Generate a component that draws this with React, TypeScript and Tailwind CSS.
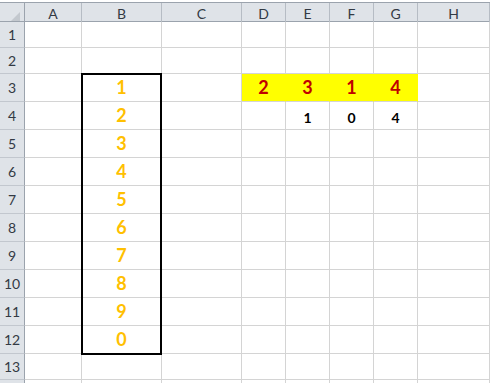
const cols = ["A", "B", "C", "D", "E", "F", "G", "H"];

// row heights in px (border included)
const rows: { n: number; h: string }[] = [
  { n: 1, h: "h-[26px]" },
  { n: 2, h: "h-[26px]" },
  ...[3, 4, 5, 6, 7, 8, 9, 10, 11, 12].map((n) => ({ n, h: "h-[28px]" })),
  { n: 13, h: "h-[26px]" },
  { n: 14, h: "h-[26px]" },
];

const digits = ["1", "2", "3", "4", "5", "6", "7", "8", "9", "0"];
const top = ["2", "3", "1", "4"];
const below = ["", "1", "0", "4"];

const gridCols =
  "grid grid-cols-[25px_57px_80px_80px_44px_44px_44px_44px_1fr]";

function Cell({ row, col }: { row: number; col: number }) {
  // col 0 = A
  let content: React.ReactNode = null;
  let extra = "border-r-[#d4d4d4]";
  if (col === 1 && row >= 3 && row <= 12) {
    content = (
      <span className="text-[18px] font-bold text-[#ffc000]">{digits[row - 3]}</span>
    );
  }
  if (row === 3 && col >= 3 && col <= 6) {
    extra = "border-r-[#ffff00] bg-[#ffff00]";
    content = (
      <span className="text-[18px] font-bold text-[#c00000]">{top[col - 3]}</span>
    );
  }
  if (row === 4 && col >= 3 && col <= 6) {
    content = (
      <span className="pt-1 text-[14px] font-bold text-black">{below[col - 3]}</span>
    );
  }
  return (
    <div
      className={`flex items-center justify-center border-b border-r border-b-[#d4d4d4] ${extra}`}
    >
      {content}
    </div>
  );
}

export default function App() {
  return (
    <div className="h-[383px] w-[490px] overflow-hidden bg-white font-['Lato','Liberation_Sans',sans-serif] pt-[2px]">
      <div className="relative">
        {/* column headers */}
        <div className={`${gridCols} h-[20px] border-y border-y-[#9ba3ad] bg-[#dfe3e8]`}>
          <div className="relative border-r border-r-[#9ba3ad]">
            <div className="absolute bottom-[3px] right-[4px] h-0 w-0 border-b-[9px] border-l-[9px] border-b-[#c3c8ce] border-l-transparent" />
          </div>
          {cols.map((c) => (
            <div
              key={c}
              className="flex items-center justify-center border-r border-r-[#b6bcc4] text-[14px] text-[#333a44]"
            >
              {c}
            </div>
          ))}
        </div>
        {/* rows */}
        {rows.map((r) => (
          <div key={r.n} className={`${gridCols} ${r.h}`}>
            <div className="flex items-center justify-center border-b border-r border-b-[#c2c7ce] border-r-[#9ba3ad] bg-[#dfe3e8] text-[14px] text-[#333a44]">
              {r.n < 14 ? r.n : null}
            </div>
            {cols.map((c, i) => (
              <Cell key={c} row={r.n} col={i} />
            ))}
          </div>
        ))}
        {/* thick outline around B3:B12 */}
        <div className="pointer-events-none absolute left-[81px] top-[71px] h-[282px] w-[81px] border-2 border-black" />
      </div>
    </div>
  );
}
